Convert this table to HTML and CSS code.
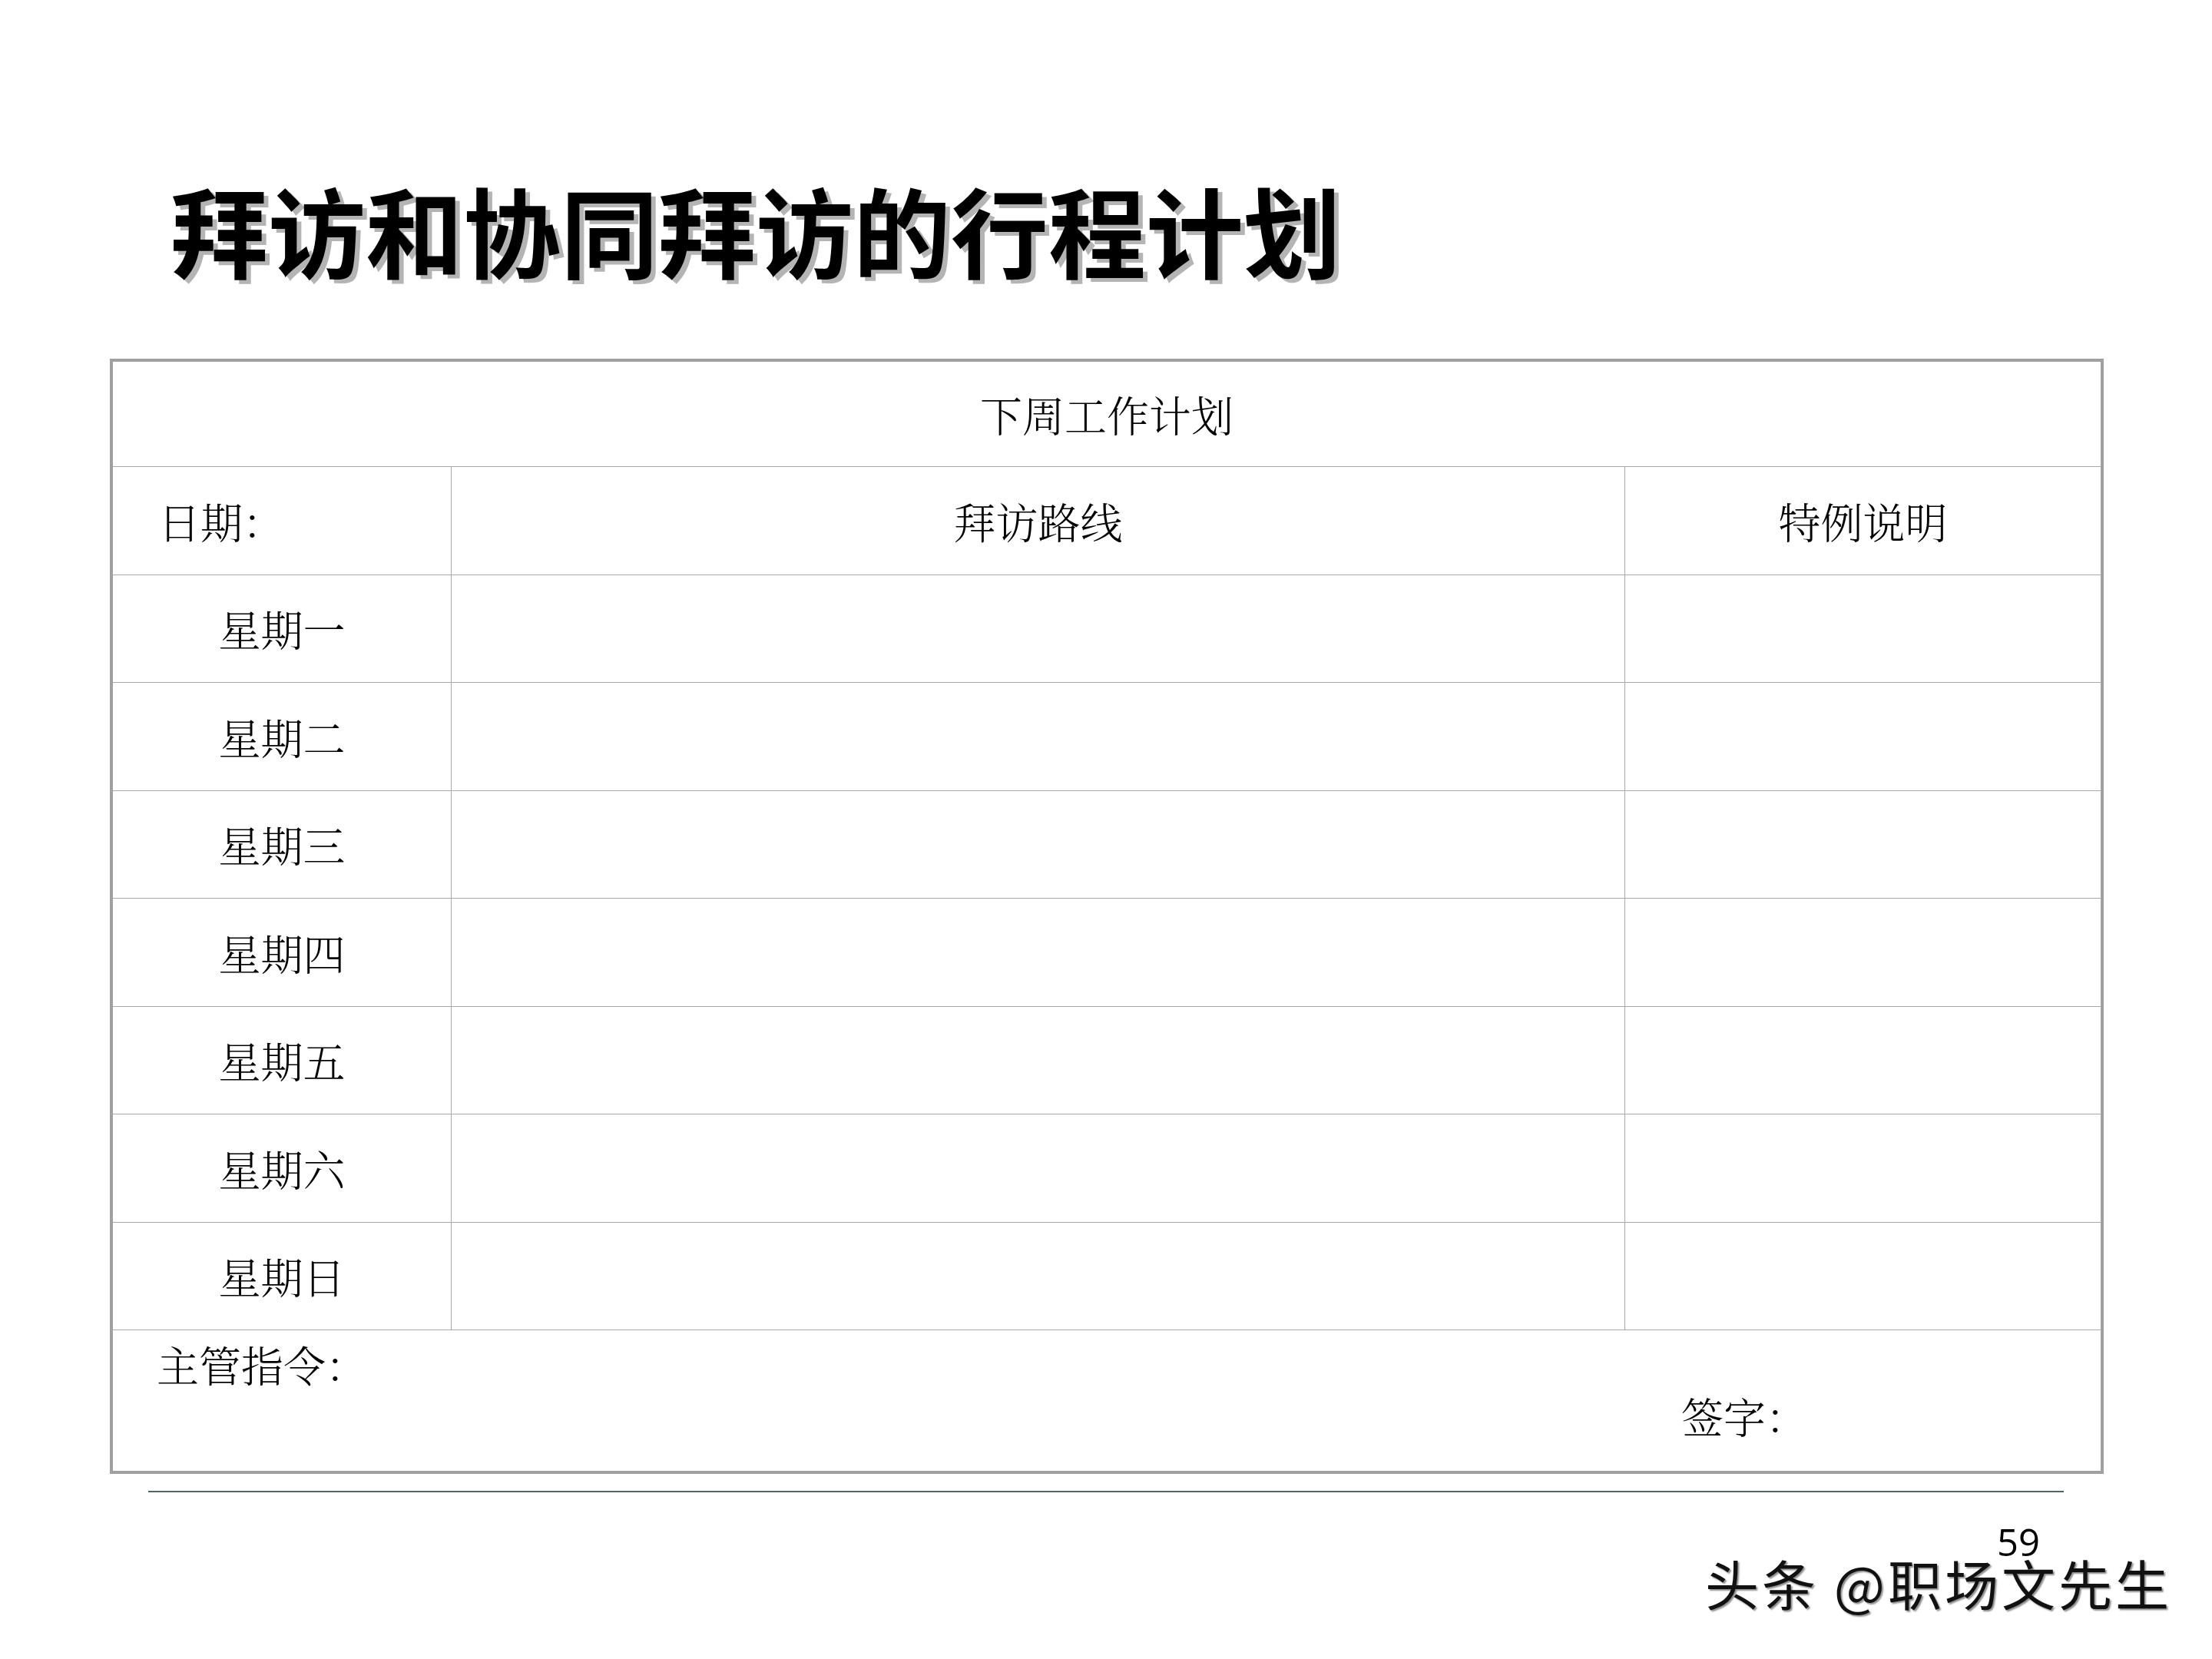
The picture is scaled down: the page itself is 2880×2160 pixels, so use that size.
FILE: index.html
```html
<!DOCTYPE html>
<html lang="zh-CN">
<head>
<meta charset="utf-8">
<title>拜访和协同拜访的行程计划</title>
<link rel="stylesheet" href="styles.css">
</head>
<body>
<div class="page">
  <h1 class="title">拜访和协同拜访的行程计划</h1>
  <div class="sheet">
    <div class="cell head">下周工作计划</div>
    <div class="cell c1 left">日期：</div>
    <div class="cell c2">拜访路线</div>
    <div class="cell c3">特例说明</div>
    <div class="cell c1">星期一</div><div class="cell c2"></div><div class="cell c3"></div>
    <div class="cell c1">星期二</div><div class="cell c2"></div><div class="cell c3"></div>
    <div class="cell c1">星期三</div><div class="cell c2"></div><div class="cell c3"></div>
    <div class="cell c1">星期四</div><div class="cell c2"></div><div class="cell c3"></div>
    <div class="cell c1">星期五</div><div class="cell c2"></div><div class="cell c3"></div>
    <div class="cell c1">星期六</div><div class="cell c2"></div><div class="cell c3"></div>
    <div class="cell c1">星期日</div><div class="cell c2"></div><div class="cell c3"></div>
    <div class="foot">
      <div class="order">主管指令：</div>
      <div class="sign">签字：</div>
    </div>
  </div>
  <div class="rule"></div>
  <div class="pageno">59</div>
  <div class="mark">头条 @职场文先生</div>
</div>
</body>
</html>
```

FILE: styles.css
```css
html, body {
  margin: 0;
  padding: 0;
  background: #ffffff;
}

.page {
  position: relative;
  width: 2880px;
  height: 2160px;
  box-sizing: border-box;
  padding-top: 235px;
  font-family: "Noto Serif CJK SC", "Noto Sans CJK SC", sans-serif;
  color: #000;
}

.title {
  margin: 0 0 0 222px;
  font-family: "Noto Sans CJK SC", sans-serif;
  font-weight: 700;
  font-size: 127px;
  line-height: 1;
  letter-spacing: 0;
  color: #000;
  text-shadow: 6px 5px 0 #b4b4b4;
  white-space: nowrap;
}

.sheet {
  margin: 105px 0 0 143px;
  width: 2596px;
  box-sizing: border-box;
  border: 4px solid #a0a0a0;
  display: grid;
  grid-template-columns: 441px 1528px auto;
  grid-template-rows: 137px repeat(8, 140.5px) 183px;
  font-size: 55px;
  font-weight: 300;
}

.cell {
  display: flex;
  align-items: center;
  justify-content: center;
  border-bottom: 1px solid #a8a8a8;
  white-space: nowrap;
  line-height: 1.2;
}

.head {
  grid-column: 1 / -1;
}

.c1, .c2 {
  border-right: 1px solid #a8a8a8;
}

.left {
  justify-content: flex-start;
  padding-left: 59px;
}

.foot {
  grid-column: 1 / -1;
  display: flex;
  flex-direction: column;
  padding-top: 11px;
  line-height: 1.2;
}

.order {
  padding-left: 57px;
}

.sign {
  margin-top: 1px;
  padding-left: 2042px;
}

.rule {
  margin: 22px 0 0 193px;
  width: 2494px;
  height: 2px;
  background: #51686a;
}

.pageno {
  margin-top: 40px;
  padding-left: 2600px;
  font-family: "Open Sans", "Noto Sans", sans-serif;
  font-size: 49px;
  line-height: 1;
  color: #000;
}

.mark {
  position: absolute;
  left: 2220px;
  top: 2026px;
  font-family: "Noto Sans CJK SC", sans-serif;
  font-size: 70px;
  font-weight: 400;
  line-height: 1;
  letter-spacing: 4px;
  white-space: nowrap;
  color: #111;
  text-shadow: 2px 2px 2px rgba(0, 0, 0, 0.45), -2px -2px 0 #ffffff;
}
```
